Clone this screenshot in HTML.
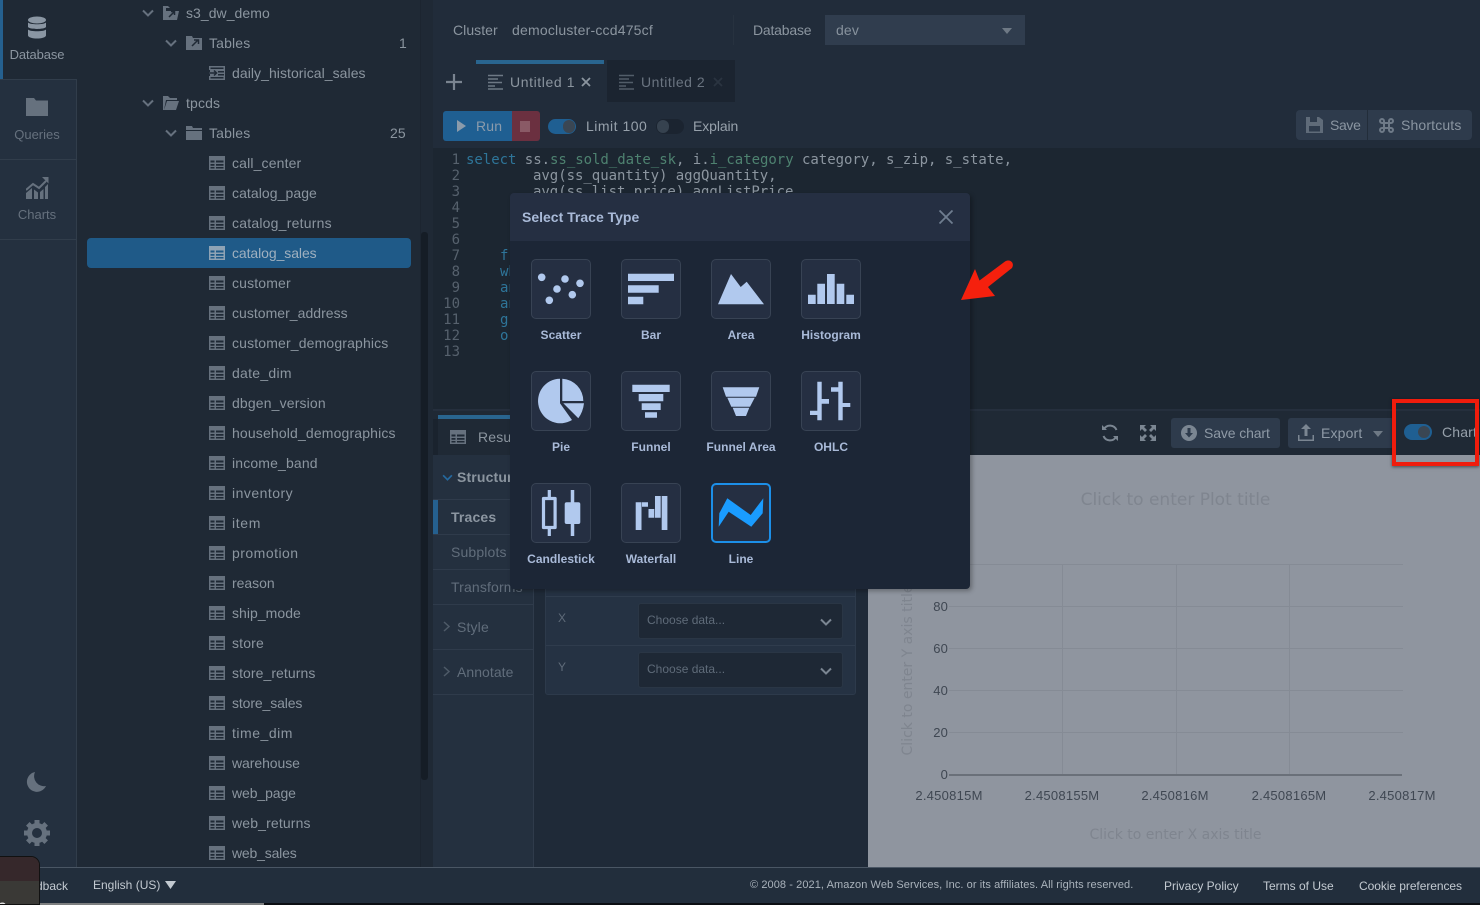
<!DOCTYPE html>
<html><head><meta charset="utf-8"><style>
*{box-sizing:border-box}
html,body{margin:0;padding:0;width:1480px;height:905px;overflow:hidden;background:#212c3a}
body{position:relative;font-family:"Liberation Sans",sans-serif;font-size:14px;letter-spacing:.15px;color:#8a95a0}
div,svg{position:absolute}
.t{position:absolute;white-space:nowrap;line-height:20px;height:20px}
.r{color:#8b959f}
.m{position:absolute;font-family:"DejaVu Sans Mono",monospace;font-size:14px;line-height:16px;letter-spacing:-.03px;white-space:pre;color:#8c96a0}
.n{position:absolute;font-family:"DejaVu Sans Mono",monospace;font-size:14px;line-height:16px;letter-spacing:0;color:#56616d;width:26px;text-align:right;left:434px}
.tile{width:60px;height:60px;background:#252f42;border:1px solid #384354;border-radius:5px}
.tile svg{left:-1px;top:-1px;width:60px;height:60px}
.l{position:absolute;width:120px;text-align:center;font-weight:bold;font-size:12px;letter-spacing:.03px;color:#a9bad8;line-height:16px}
.tk{position:absolute;font-size:13px;line-height:16px;color:#3f4752;letter-spacing:.25px;text-align:center;width:90px}
.ty{position:absolute;font-size:13px;line-height:16px;color:#3f4752;width:24px;text-align:right;left:924px}
.f{position:absolute;font-size:12px;line-height:16px;white-space:nowrap;color:#c3cad1;letter-spacing:0}
</style></head><body>
<svg width="0" height="0" style="left:0;top:0"><defs>
<symbol id="tb" viewBox="0 0 16 14"><path fill="#66717e" d="M0 0h16v14H0z"/><path fill="#1f2935" d="M1.500 4.500h4v2h-4zM7 4.500h7.500v2H7zM1.500 8h4v1.700h-4zM7 8h7.500v1.700H7zM1.500 11h4v1.500h-4zM7 11h7.500v1.500H7z"/></symbol>
<symbol id="tbs" viewBox="0 0 16 14"><path fill="#8fa3b5" d="M0 0h16v14H0z"/><path fill="#1f5a88" d="M1.500 4.500h4v2h-4zM7 4.500h7.500v2H7zM1.500 8h4v1.700h-4zM7 8h7.500v1.700H7zM1.500 11h4v1.500h-4zM7 11h7.500v1.500H7z"/></symbol>
<symbol id="ch" viewBox="0 0 12 8"><path fill="none" stroke="#66717e" stroke-width="2" d="M1 1.500l5 5 5-5"/></symbol>
</defs></svg>

<!-- tree -->
<div style="left:77px;top:0;width:356px;height:867px;background:#1f2935"></div>
<div style="left:87px;top:238px;width:324px;height:30px;background:#1f5a88;border-radius:4px"></div>
<div style="left:421px;top:232px;width:7px;height:548px;background:#151d26;border-radius:3px"></div>
<div style="left:420px;top:0;width:1px;height:867px;background:#1c2530"></div>

<!-- rail -->
<div style="left:0;top:0;width:77px;height:867px;background:#24303f;border-right:1px solid #313d4b"></div>
<div style="left:0;top:0;width:77px;height:80px;background:#1f2935"></div>
<div style="left:0;top:0;width:3px;height:80px;background:#25608f"></div>
<div style="left:0;top:79px;width:77px;height:1px;background:#313d4b"></div>
<div style="left:0;top:159px;width:77px;height:1px;background:#313d4b"></div>
<div style="left:0;top:239px;width:77px;height:1px;background:#313d4b"></div>
<svg style="left:27px;top:16px" width="20" height="24" viewBox="0 0 20 24"><ellipse cx="10" cy="4" rx="9" ry="3.500" fill="#8a96a3"/><path fill="#8a96a3" d="M1 6.500c2 2.400 16 2.400 18 0V11c-2 2.600-16 2.600-18 0zM1 13.500c2 2.400 16 2.400 18 0V19.500c-1 4-17 4-18 0z"/></svg>
<div class="t" style="left:0;width:74px;text-align:center;top:45px;font-size:13px;letter-spacing:-.1px;color:#8b95a0">Database</div>
<svg style="left:26px;top:98px" width="22" height="19" viewBox="0 0 22 19"><path fill="#66717e" d="M0 0h8l2 2.500h12V18H0z"/></svg>
<div class="t" style="left:0;width:74px;text-align:center;top:125px;font-size:13px;letter-spacing:0;color:#66717e">Queries</div>
<svg style="left:26px;top:177px" width="23" height="22" viewBox="0 0 23 22"><path fill="#66717e" d="M0 16l6-5v11H0zM8 12.500l4 3V22H8zM14 15l3.500-3V22H14zM19 10l3-3V22h-3z"/><path fill="none" stroke="#66717e" stroke-width="2" d="M0 13l7-6 6 4 7-7"/><path fill="#66717e" d="M16 0h6.500v6.500z"/></svg>
<div class="t" style="left:0;width:74px;text-align:center;top:205px;font-size:13px;letter-spacing:0;color:#66717e">Charts</div>
<svg style="left:26px;top:771px" width="21" height="21" viewBox="0 0 21 21"><path fill="#66717e" d="M9 1A10 10 0 1 0 20 15 10 10 0 0 1 9 1z"/></svg>
<svg style="left:24px;top:820px" width="26" height="26" viewBox="0 0 26 26"><circle cx="13" cy="13" r="7.500" fill="none" stroke="#66717e" stroke-width="5"/><path stroke="#66717e" stroke-width="5" d="M13 0v5M13 21v5M0 13h5M21 13h5M3.800 3.800l3.600 3.600M18.600 18.600l3.600 3.600M3.800 22.200l3.600-3.600M18.600 7.400l3.600-3.600"/></svg>

<!-- tree rows -->
<svg style="left:142px;top:9px" width="12" height="8"><use href="#ch"/></svg>
<svg style="left:163px;top:6px" width="16" height="14" viewBox="0 0 16 14"><path fill="#66717e" d="M0 0h5l2 2h-4v12H0zM3 5h13l-2 9H1z"/><path stroke="#1f2935" stroke-width="1.500" fill="none" d="M6 11l5-5M8 5.500h3.500V9"/></svg>
<div class="t r" style="left:186px;top:3px;letter-spacing:.05px">s3_dw_demo</div>
<svg style="left:165px;top:39px" width="12" height="8"><use href="#ch"/></svg>
<svg style="left:186px;top:36px" width="16" height="14" viewBox="0 0 16 14"><path fill="#66717e" d="M0 0h6l1 2h9v12H0z"/><path stroke="#1f2935" stroke-width="1.500" fill="none" d="M6 10l6-6M8 4h4.500v4"/></svg>
<div class="t r" style="left:209px;top:33px">Tables</div>
<div class="t r" style="left:399px;top:33px">1</div>
<svg style="left:209px;top:66px" width="16" height="14" viewBox="0 0 16 14"><path fill="#66717e" d="M0 0h16v14H0z"/><path fill="#1f2935" d="M0 4h1v2H0zM0 8h1v2H0zM9 5h6v1.500H9zM9 8h6v1.500H9zM1.500 1.500h13v1.500h-13zM1.500 11h13v1.500h-13z"/><path stroke="#1f2935" stroke-width="1.500" fill="none" d="M0 7h7M5 4.500L7.500 7 5 9.500"/></svg>
<div class="t r" style="left:232px;top:63px;letter-spacing:.06px">daily_historical_sales</div>
<svg style="left:142px;top:99px" width="12" height="8"><use href="#ch"/></svg>
<svg style="left:163px;top:96px" width="16" height="14" viewBox="0 0 16 14"><path fill="#66717e" d="M0 0h5l2 2h7v2H3L1 14H0zM4 5h12l-3 9H1z"/></svg>
<div class="t r" style="left:186px;top:93px">tpcds</div>
<svg style="left:165px;top:129px" width="12" height="8"><use href="#ch"/></svg>
<svg style="left:186px;top:126px" width="16" height="14" viewBox="0 0 16 14"><path fill="#66717e" d="M0 0h6l1 2h9v2H0zM0 5h16v9H0z"/></svg>
<div class="t r" style="left:209px;top:123px">Tables</div>
<div class="t r" style="left:390px;top:123px">25</div>

<svg style="left:209px;top:156px" width="16" height="14"><use href="#tb"/></svg><div class="t r" style="left:232px;top:153px">call_center</div>
<svg style="left:209px;top:186px" width="16" height="14"><use href="#tb"/></svg><div class="t r" style="left:232px;top:183px;letter-spacing:.07px">catalog_page</div>
<svg style="left:209px;top:216px" width="16" height="14"><use href="#tb"/></svg><div class="t r" style="left:232px;top:213px;letter-spacing:.22px">catalog_returns</div>
<svg style="left:209px;top:246px" width="16" height="14"><use href="#tbs"/></svg><div class="t" style="left:232px;top:243px;color:#9fb0bf;letter-spacing:-.08px">catalog_sales</div>
<svg style="left:209px;top:276px" width="16" height="14"><use href="#tb"/></svg><div class="t r" style="left:232px;top:273px">customer</div>
<svg style="left:209px;top:306px" width="16" height="14"><use href="#tb"/></svg><div class="t r" style="left:232px;top:303px;letter-spacing:.03px">customer_address</div>
<svg style="left:209px;top:336px" width="16" height="14"><use href="#tb"/></svg><div class="t r" style="left:232px;top:333px">customer_demographics</div>
<svg style="left:209px;top:366px" width="16" height="14"><use href="#tb"/></svg><div class="t r" style="left:232px;top:363px;letter-spacing:.27px">date_dim</div>
<svg style="left:209px;top:396px" width="16" height="14"><use href="#tb"/></svg><div class="t r" style="left:232px;top:393px">dbgen_version</div>
<svg style="left:209px;top:426px" width="16" height="14"><use href="#tb"/></svg><div class="t r" style="left:232px;top:423px">household_demographics</div>
<svg style="left:209px;top:456px" width="16" height="14"><use href="#tb"/></svg><div class="t r" style="left:232px;top:453px">income_band</div>
<svg style="left:209px;top:486px" width="16" height="14"><use href="#tb"/></svg><div class="t r" style="left:232px;top:483px;letter-spacing:.48px">inventory</div>
<svg style="left:209px;top:516px" width="16" height="14"><use href="#tb"/></svg><div class="t r" style="left:232px;top:513px;letter-spacing:.65px">item</div>
<svg style="left:209px;top:546px" width="16" height="14"><use href="#tb"/></svg><div class="t r" style="left:232px;top:543px;letter-spacing:.48px">promotion</div>
<svg style="left:209px;top:576px" width="16" height="14"><use href="#tb"/></svg><div class="t r" style="left:232px;top:573px;letter-spacing:-.02px">reason</div>
<svg style="left:209px;top:606px" width="16" height="14"><use href="#tb"/></svg><div class="t r" style="left:232px;top:603px;letter-spacing:.04px">ship_mode</div>
<svg style="left:209px;top:636px" width="16" height="14"><use href="#tb"/></svg><div class="t r" style="left:232px;top:633px">store</div>
<svg style="left:209px;top:666px" width="16" height="14"><use href="#tb"/></svg><div class="t r" style="left:232px;top:663px;letter-spacing:.07px">store_returns</div>
<svg style="left:209px;top:696px" width="16" height="14"><use href="#tb"/></svg><div class="t r" style="left:232px;top:693px;letter-spacing:-.12px">store_sales</div>
<svg style="left:209px;top:726px" width="16" height="14"><use href="#tb"/></svg><div class="t r" style="left:232px;top:723px;letter-spacing:.52px">time_dim</div>
<svg style="left:209px;top:756px" width="16" height="14"><use href="#tb"/></svg><div class="t r" style="left:232px;top:753px;letter-spacing:-.07px">warehouse</div>
<svg style="left:209px;top:786px" width="16" height="14"><use href="#tb"/></svg><div class="t r" style="left:232px;top:783px;letter-spacing:-.1px">web_page</div>
<svg style="left:209px;top:816px" width="16" height="14"><use href="#tb"/></svg><div class="t r" style="left:232px;top:813px">web_returns</div>
<svg style="left:209px;top:846px" width="16" height="14"><use href="#tb"/></svg><div class="t r" style="left:232px;top:843px;letter-spacing:-.18px">web_sales</div>

<!-- top main -->
<div style="left:433px;top:0;width:1047px;height:148px;background:#212c3a"></div>
<div class="t" style="left:453px;top:20px;letter-spacing:.05px;color:#8b959f">Cluster</div>
<div class="t" style="left:512px;top:20px;letter-spacing:.2px;color:#8b959f">democluster-ccd475cf</div>
<div style="left:733px;top:15px;width:1px;height:30px;background:#27323f"></div>
<div class="t" style="left:753px;top:20px;letter-spacing:-.2px;color:#8b959f">Database</div>
<div style="left:825px;top:15px;width:200px;height:30px;background:#303d4e"></div>
<div class="t" style="left:836px;top:20px;color:#87929d">dev</div>
<svg style="left:1002px;top:28px" width="10" height="6"><path fill="#6e7985" d="M0 0h10L5 6z"/></svg>

<div style="left:476px;top:60px;height:4px;background:#29658f;width:128px"></div>
<svg style="left:446px;top:74px" width="16" height="16"><path stroke="#7a8490" stroke-width="2.200" d="M8 0v16M0 8h16"/></svg>
<svg style="left:488px;top:74px" width="16" height="16" viewBox="0 0 16 16"><path stroke="#6e7985" stroke-width="1.500" d="M0 1.500h15M0 5h10M0 8.500h14M0 12h7M0 15h15"/></svg>
<div class="t" style="left:510px;top:72px;letter-spacing:.6px;color:#8b959f">Untitled 1</div>
<svg style="left:581px;top:77px" width="10" height="10"><path stroke="#8b959f" stroke-width="1.800" d="M1 1l8 8M9 1l-8 8"/></svg>
<div style="left:607px;top:60px;width:128px;height:42px;background:#1b2430"></div>
<svg style="left:619px;top:74px" width="16" height="16" viewBox="0 0 16 16"><path stroke="#525d69" stroke-width="1.500" d="M0 1.500h15M0 5h10M0 8.500h14M0 12h7M0 15h15"/></svg>
<div class="t" style="left:641px;top:72px;letter-spacing:.5px;color:#6a7480">Untitled 2</div>
<svg style="left:713px;top:77px" width="10" height="10"><path stroke="#2a3440" stroke-width="1.800" d="M1 1l8 8M9 1l-8 8"/></svg>

<div style="left:443px;top:111px;width:69px;height:30px;background:#1f5f92;border-radius:3px 0 0 3px"></div>
<svg style="left:457px;top:120px" width="9" height="12"><path fill="#8b9bab" d="M0 0l9 6-9 6z"/></svg>
<div class="t" style="left:476px;top:116px;color:#8b9bab">Run</div>
<div style="left:512px;top:111px;width:28px;height:30px;background:#6b3040;border-radius:0 3px 3px 0"></div>
<div style="left:520px;top:121px;width:10px;height:11px;background:#8a5a66"></div>
<div style="left:548px;top:119px;width:28px;height:15px;background:#1f5f92;border-radius:8px"></div>
<div style="left:563px;top:120px;width:12px;height:13px;background:#3a4653;border-radius:7px"></div>
<div class="t" style="left:586px;top:116px;letter-spacing:.5px;color:#97a1ab">Limit 100</div>
<div style="left:656px;top:119px;width:28px;height:15px;background:#1b2430;border-radius:8px"></div>
<div style="left:657px;top:120px;width:12px;height:13px;background:#36424f;border-radius:7px"></div>
<div class="t" style="left:693px;top:116px;letter-spacing:-.1px;color:#97a1ab">Explain</div>

<div style="left:1296px;top:110px;width:176px;height:30px;background:#2e3b4c;border-radius:4px"></div>
<div style="left:1367px;top:110px;width:1px;height:30px;background:#222d3a"></div>
<svg style="left:1306px;top:117px" width="17" height="16" viewBox="0 0 17 16"><path fill="#5f6b79" d="M0 0h13l4 3v13H0z"/><path fill="#2e3b4c" d="M4 0h7v5H4zM3 9h11v5.500H3z"/></svg>
<div class="t" style="left:1330px;top:115px;letter-spacing:-.35px;color:#8a95a1">Save</div>
<svg style="left:1379px;top:118px" width="15" height="15" viewBox="0 0 15 15"><path fill="none" stroke="#6e7a88" stroke-width="2" d="M5 5h5v5H5zM5 5H3a2 2 0 1 1 2-2zM10 5V3a2 2 0 1 1 2 2zM10 10h2a2 2 0 1 1-2 2zM5 10v2a2 2 0 1 1-2-2z"/></svg>
<div class="t" style="left:1401px;top:115px;color:#8a95a1">Shortcuts</div>

<!-- editor -->
<div style="left:433px;top:148px;width:1047px;height:262px;background:#1c2631"></div>
<div class="n" style="top:152px">1</div><div class="n" style="top:168px">2</div><div class="n" style="top:184px">3</div><div class="n" style="top:200px">4</div><div class="n" style="top:216px">5</div><div class="n" style="top:232px">6</div><div class="n" style="top:248px">7</div><div class="n" style="top:264px">8</div><div class="n" style="top:280px">9</div><div class="n" style="top:296px">10</div><div class="n" style="top:312px">11</div><div class="n" style="top:328px">12</div><div class="n" style="top:344px">13</div>
<div class="m" style="left:466px;top:152px"><span style="color:#2e7599">select</span> ss.<span style="color:#4e8270">ss_sold_date_sk</span>, i.<span style="color:#4e8270">i_category</span> category, s_zip, s_state,</div>
<div class="m" style="left:533px;top:168px">avg(ss_quantity) aggQuantity,</div>
<div class="m" style="left:533px;top:184px">avg(ss_list_price) aggListPrice,</div>
<div class="m" style="left:500px;top:248px;color:#2e7599">f</div>
<div class="m" style="left:500px;top:264px;color:#2e7599">wh</div>
<div class="m" style="left:500px;top:280px;color:#2e7599">an</div>
<div class="m" style="left:500px;top:296px;color:#2e7599">an</div>
<div class="m" style="left:500px;top:312px;color:#2e7599">gr</div>
<div class="m" style="left:500px;top:328px;color:#2e7599">or</div>

<!-- results bar -->
<div style="left:433px;top:409px;width:1047px;height:46px;background:#1f2935"></div>
<div style="left:433px;top:409px;width:1047px;height:2px;background:#252f3d"></div>
<div style="left:438px;top:415px;width:72px;height:4px;background:#29658f"></div>
<div style="left:433px;top:419px;width:5px;height:36px;background:#1a232e"></div>
<svg style="left:450px;top:430px" width="16" height="14"><use href="#tb"/></svg>
<div class="t" style="left:478px;top:427px;color:#8b959f">Result</div>
<svg style="left:1101px;top:424px" width="18" height="18" viewBox="0 0 18 18"><path fill="none" stroke="#7b8692" stroke-width="2" d="M15.500 6A7 7 0 0 0 3 5M2.500 12A7 7 0 0 0 15 13"/><path fill="#7b8692" d="M1 1l5 5H1zM17 17l-5-5h5z"/></svg>
<svg style="left:1140px;top:425px" width="16" height="16" viewBox="0 0 16 16"><path fill="#7b8692" d="M0 0h6L4 2l3 3-2 2-3-3-2 2zM16 0v6l-2-2-3 3-2-2 3-3-2-2zM0 16v-6l2 2 3-3 2 2-3 3 2 2zM16 16h-6l2-2-3-3 2-2 3 3 2-2z"/></svg>
<div style="left:1171px;top:418px;width:109px;height:30px;background:#2e3b4c;border-radius:3px"></div>
<svg style="left:1181px;top:425px" width="16" height="16" viewBox="0 0 16 16"><circle cx="8" cy="8" r="8" fill="#7b8692"/><path fill="#2e3b4c" d="M6.500 3h3v5h2.500L8 12.500 4 8h2.500z"/></svg>
<div class="t" style="left:1204px;top:423px;letter-spacing:-.12px;color:#8f9aa6">Save chart</div>
<div style="left:1288px;top:418px;width:106px;height:30px;background:#2e3b4c;border-radius:3px"></div>
<svg style="left:1298px;top:424px" width="16" height="17" viewBox="0 0 16 17"><path fill="#7b8692" d="M8 0l5 5H9.500v7h-3V5H3zM0 11h1.500v4.500h13V11H16v6H0z"/></svg>
<div class="t" style="left:1321px;top:423px;color:#8f9aa6">Export</div>
<svg style="left:1373px;top:431px" width="10" height="6"><path fill="#6e7985" d="M0 0h10L5 6z"/></svg>
<div style="left:1404px;top:424px;width:28px;height:16px;background:#1f5f92;border-radius:8px"></div>
<div style="left:1418px;top:426px;width:12px;height:12px;background:#3a4653;border-radius:6px"></div>
<div class="t" style="left:1442px;top:422px;color:#97a1ab">Chart</div>

<!-- chart editor -->
<div style="left:433px;top:455px;width:100px;height:412px;background:#24303f"></div>
<div style="left:533px;top:455px;width:335px;height:412px;background:#1f2a38;border-left:1px solid #2f3b4b"></div>
<svg style="left:442px;top:474px" width="11" height="7" viewBox="0 0 12 8"><path fill="none" stroke="#25699f" stroke-width="2" d="M1 1.500l5 5 5-5"/></svg>
<div class="t" style="left:457px;top:467px;font-weight:bold;color:#8b959f">Structure</div>
<div style="left:433px;top:499px;width:100px;height:1px;background:#2f3b4b"></div>
<div style="left:433px;top:500px;width:5px;height:34px;background:#25608f"></div>
<div class="t" style="left:451px;top:507px;font-weight:bold;color:#8c96a1">Traces</div>
<div style="left:433px;top:534px;width:100px;height:1px;background:#2f3b4b"></div>
<div class="t" style="left:451px;top:542px;color:#616d7b">Subplots</div>
<div style="left:433px;top:569px;width:100px;height:1px;background:#2f3b4b"></div>
<div class="t" style="left:451px;top:577px;color:#616d7b">Transforms</div>
<div style="left:433px;top:604px;width:100px;height:1px;background:#2f3b4b"></div>
<svg style="left:443px;top:621px" width="7" height="11"><path fill="none" stroke="#4e5a68" stroke-width="1.500" d="M1 1l5 4.500L1 10"/></svg>
<div class="t" style="left:457px;top:617px;color:#616d7b">Style</div>
<div style="left:433px;top:649px;width:100px;height:1px;background:#2f3b4b"></div>
<svg style="left:443px;top:666px" width="7" height="11"><path fill="none" stroke="#4e5a68" stroke-width="1.500" d="M1 1l5 4.500L1 10"/></svg>
<div class="t" style="left:457px;top:662px;letter-spacing:.05px;color:#616d7b">Annotate</div>
<div style="left:433px;top:694px;width:100px;height:1px;background:#2f3b4b"></div>

<div style="left:545px;top:580px;width:311px;height:115px;background:#253243;border:1px solid #2d3a4b;border-radius:3px"></div>
<div style="left:546px;top:596px;width:309px;height:1px;background:#2f3c4d"></div>
<div style="left:546px;top:645px;width:309px;height:1px;background:#2f3c4d"></div>
<div class="t" style="left:558px;top:608px;font-size:12px;color:#5f6b79">X</div>
<div class="t" style="left:558px;top:657px;font-size:12px;color:#5f6b79">Y</div>
<div style="left:638px;top:603px;width:205px;height:36px;background:#1e2835;border:1px solid #2a3645;border-radius:3px"></div>
<div class="t" style="left:647px;top:610px;font-size:12px;letter-spacing:0;color:#5f6b79">Choose data...</div>
<svg style="left:820px;top:618px" width="12" height="8"><path fill="none" stroke="#7b8692" stroke-width="2" d="M1 1.500l5 5 5-5"/></svg>
<div style="left:638px;top:652px;width:205px;height:36px;background:#1e2835;border:1px solid #2a3645;border-radius:3px"></div>
<div class="t" style="left:647px;top:659px;font-size:12px;letter-spacing:0;color:#5f6b79">Choose data...</div>
<svg style="left:820px;top:667px" width="12" height="8"><path fill="none" stroke="#7b8692" stroke-width="2" d="M1 1.500l5 5 5-5"/></svg>

<!-- chart -->
<div style="left:868px;top:455px;width:612px;height:412px;background:#8f959f"></div>
<svg style="left:868px;top:455px" width="612" height="412" viewBox="868 455 612 412">
<path stroke="#858b95" stroke-width="1" fill="none" d="M949 564.500H1403M949 606.500H1403M949 648.500H1403M949 690.500H1403M949 732.500H1403M1062.500 564V775M1176.500 564V775M1289.500 564V775"/>
<path stroke="#6a7079" stroke-width="2" d="M949 775H1402"/>
<text x="1175.500" y="505" text-anchor="middle" font-family="DejaVu Sans" font-size="17" fill="#7f858f" letter-spacing="0">Click to enter Plot title</text>
<text x="1175.500" y="839" text-anchor="middle" font-family="DejaVu Sans" font-size="14" fill="#7f858f" letter-spacing="0">Click to enter X axis title</text>
<text transform="translate(912,670) rotate(-90)" text-anchor="middle" font-family="DejaVu Sans" font-size="14" fill="#7f858f" letter-spacing="0">Click to enter Y axis title</text>
</svg>
<div class="ty" style="top:599px">80</div><div class="ty" style="top:641px">60</div><div class="ty" style="top:683px">40</div><div class="ty" style="top:725px">20</div><div class="ty" style="top:767px">0</div>
<div class="tk" style="left:904px;top:788px">2.450815M</div><div class="tk" style="left:1017px;top:788px">2.4508155M</div><div class="tk" style="left:1130px;top:788px">2.450816M</div><div class="tk" style="left:1244px;top:788px">2.4508165M</div><div class="tk" style="left:1357px;top:788px">2.450817M</div>

<!-- modal -->
<div style="left:510px;top:193px;width:460px;height:396px;background:#1c2636;border-radius:4px;box-shadow:2px 2px 5px rgba(0,0,0,.3)"></div>
<div style="left:510px;top:193px;width:460px;height:48px;background:#252f42;border-radius:4px 4px 0 0"></div>
<div class="t" style="left:522px;top:207px;font-weight:bold;letter-spacing:0;color:#a9bad8">Select Trace Type</div>
<svg style="left:939px;top:210px" width="14" height="14"><path stroke="#6f7d90" stroke-width="1.800" d="M0.500 0.500l13 13M13.500 0.500l-13 13"/></svg>

<div class="tile" style="left:531px;top:259px"><svg viewBox="0 0 60 60"><g fill="#b1c9ee"><circle cx="10.700" cy="18.300" r="3.800"/><circle cx="34" cy="20" r="3.800"/><circle cx="49" cy="24.300" r="3.800"/><circle cx="26" cy="30" r="3.800"/><circle cx="41.300" cy="35.700" r="3.800"/><circle cx="18.300" cy="41.300" r="3.800"/></g></svg></div>
<div class="tile" style="left:621px;top:259px"><svg viewBox="0 0 60 60"><path fill="#b1c9ee" d="M7 14.700h46V22H7zM7 26.300h30.700v7.400H7zM7 37.700h15.300v7.600H7z"/></svg></div>
<div class="tile" style="left:711px;top:259px"><svg viewBox="0 0 60 60"><path fill="#b1c9ee" d="M20 15l9.700 13 6-5.300L53 45.300H7z"/></svg></div>
<div class="tile" style="left:801px;top:259px"><svg viewBox="0 0 60 60"><path fill="#b1c9ee" d="M7 35.700h7.700V45H7zM16.300 24.700H24V45h-7.700zM26 15h7.700v30H26zM35.700 24.700h7.600V45h-7.600zM45.300 35.700H53V45h-7.700z"/></svg></div>
<div class="l" style="left:501px;top:327px">Scatter</div><div class="l" style="left:591px;top:327px">Bar</div><div class="l" style="left:681px;top:327px">Area</div><div class="l" style="left:771px;top:327px">Histogram</div>

<div class="tile" style="left:531px;top:371px"><svg viewBox="0 0 60 60"><path fill="#b1c9ee" d="M31.300 7.700A22.300 22.300 0 0 1 52.300 30H31.300zM29 7.700V32.300L41 49A22.300 22.300 0 1 1 29 7.700zM32.300 32.300H53Q52 41 47.300 47.300z"/></svg></div>
<div class="tile" style="left:621px;top:371px"><svg viewBox="0 0 60 60"><path fill="#b1c9ee" d="M11.300 13.700h37.400V21H11.300zM17.700 23h24.600v7.300H17.700zM20.700 32.300h19V39h-19zM24 41.300h12v5.400H24z"/></svg></div>
<div class="tile" style="left:711px;top:371px"><svg viewBox="0 0 60 60"><path fill="#b1c9ee" d="M11.700 16.300h36.600L45 25.700H15zM16.300 26.700h27.400L39 35.700H20.300zM21.700 36.700h16.600L35 45H25z"/></svg></div>
<div class="tile" style="left:801px;top:371px"><svg viewBox="0 0 60 60"><path fill="#b1c9ee" d="M16.300 10.700h4.400v17.300H28v4.700h-7.300v16.600h-4.400V44H9v-4.300h7.300zM37.300 10.700h4.400V32h7.600v4h-7.600v13.300h-4.400V20.700H30v-4.400h7.300z"/></svg></div>
<div class="l" style="left:501px;top:439px">Pie</div><div class="l" style="left:591px;top:439px">Funnel</div><div class="l" style="left:681px;top:439px">Funnel Area</div><div class="l" style="left:771px;top:439px">OHLC</div>

<div class="tile" style="left:531px;top:483px"><svg viewBox="0 0 60 60"><path fill="none" stroke="#b1c9ee" stroke-width="3.200" d="M18.300 7v8M18.300 45v8M12.500 15.500h11.600v29H12.500z" stroke-linejoin="round"/><path fill="none" stroke="#b1c9ee" stroke-width="3.500" d="M41.500 7v46"/><rect x="33.700" y="19.300" width="15.600" height="21.700" rx="2" fill="#b1c9ee"/></svg></div>
<div class="tile" style="left:621px;top:483px"><svg viewBox="0 0 60 60"><path fill="#b1c9ee" d="M14.700 19.300h5.800V47h-5.800zM21 19.300h6v4.400h-6zM27.500 26h5.800v8.700h-5.800zM34 13h5.700v21.700H34zM40.700 13h5.700V47h-5.700z"/></svg></div>
<div class="tile" style="left:711px;top:483px;border:2px solid #1c8fe8"><svg style="left:-2px;top:-2px" viewBox="0 0 60 60"><path fill="#1a9cff" d="M7.700 43.700L8.300 30.300 16.300 15.300 39.700 32 52.300 15.300 51.700 30.300 40.300 43.700 17.700 28.700z"/></svg></div>
<div class="l" style="left:501px;top:551px">Candlestick</div><div class="l" style="left:591px;top:551px">Waterfall</div><div class="l" style="left:681px;top:551px">Line</div>

<!-- arrow -->
<svg style="left:950px;top:250px" width="80" height="60" viewBox="950 250 80 60"><path fill="#f5200d" d="M961 300L975 269 979.500 280.500 1005 261.500C1010 258.500 1015 263 1012 268L988 287 995 296z"/></svg>
<!-- red box -->
<div style="left:1392px;top:399px;width:87px;height:67px;border:4.500px solid #f01c0c;box-shadow:0 1px 3px rgba(0,0,0,.5)"></div>

<!-- footer -->
<div style="left:0;top:867px;width:1480px;height:36px;background:#222e3c;border-top:1px solid #4a5664"></div>
<div style="left:0;top:903px;width:1480px;height:2px;background:#0c0f13"></div>
<div style="left:40px;top:903px;width:224px;height:2px;background:#7d7f80"></div>
<div class="f" style="left:36px;top:878px">dback</div>
<div class="f" style="left:93px;top:877px">English (US)</div>
<svg style="left:165px;top:881px" width="11" height="8"><path fill="#c3cad1" d="M0 0h11L5.500 8z"/></svg>
<div class="f" style="left:750px;top:877px;font-size:11px;letter-spacing:.08px;color:#aab3bc">© 2008 - 2021, Amazon Web Services, Inc. or its affiliates. All rights reserved.</div>
<div class="f" style="left:1164px;top:878px">Privacy Policy</div>
<div class="f" style="left:1263px;top:878px">Terms of Use</div>
<div class="f" style="left:1359px;top:878px;letter-spacing:-.06px">Cookie preferences</div>
<div style="left:0;top:856px;width:40px;height:49px;background:#3a3936;border-radius:0 9px 0 0;border:1px solid #111;border-left:0;overflow:hidden"><div style="left:0;top:0;width:39px;height:24px;background:#36282b"></div><div class="t" style="left:-2px;top:38px;color:#e5e5e5;font-weight:bold;letter-spacing:0">o</div></div>
</body></html>
